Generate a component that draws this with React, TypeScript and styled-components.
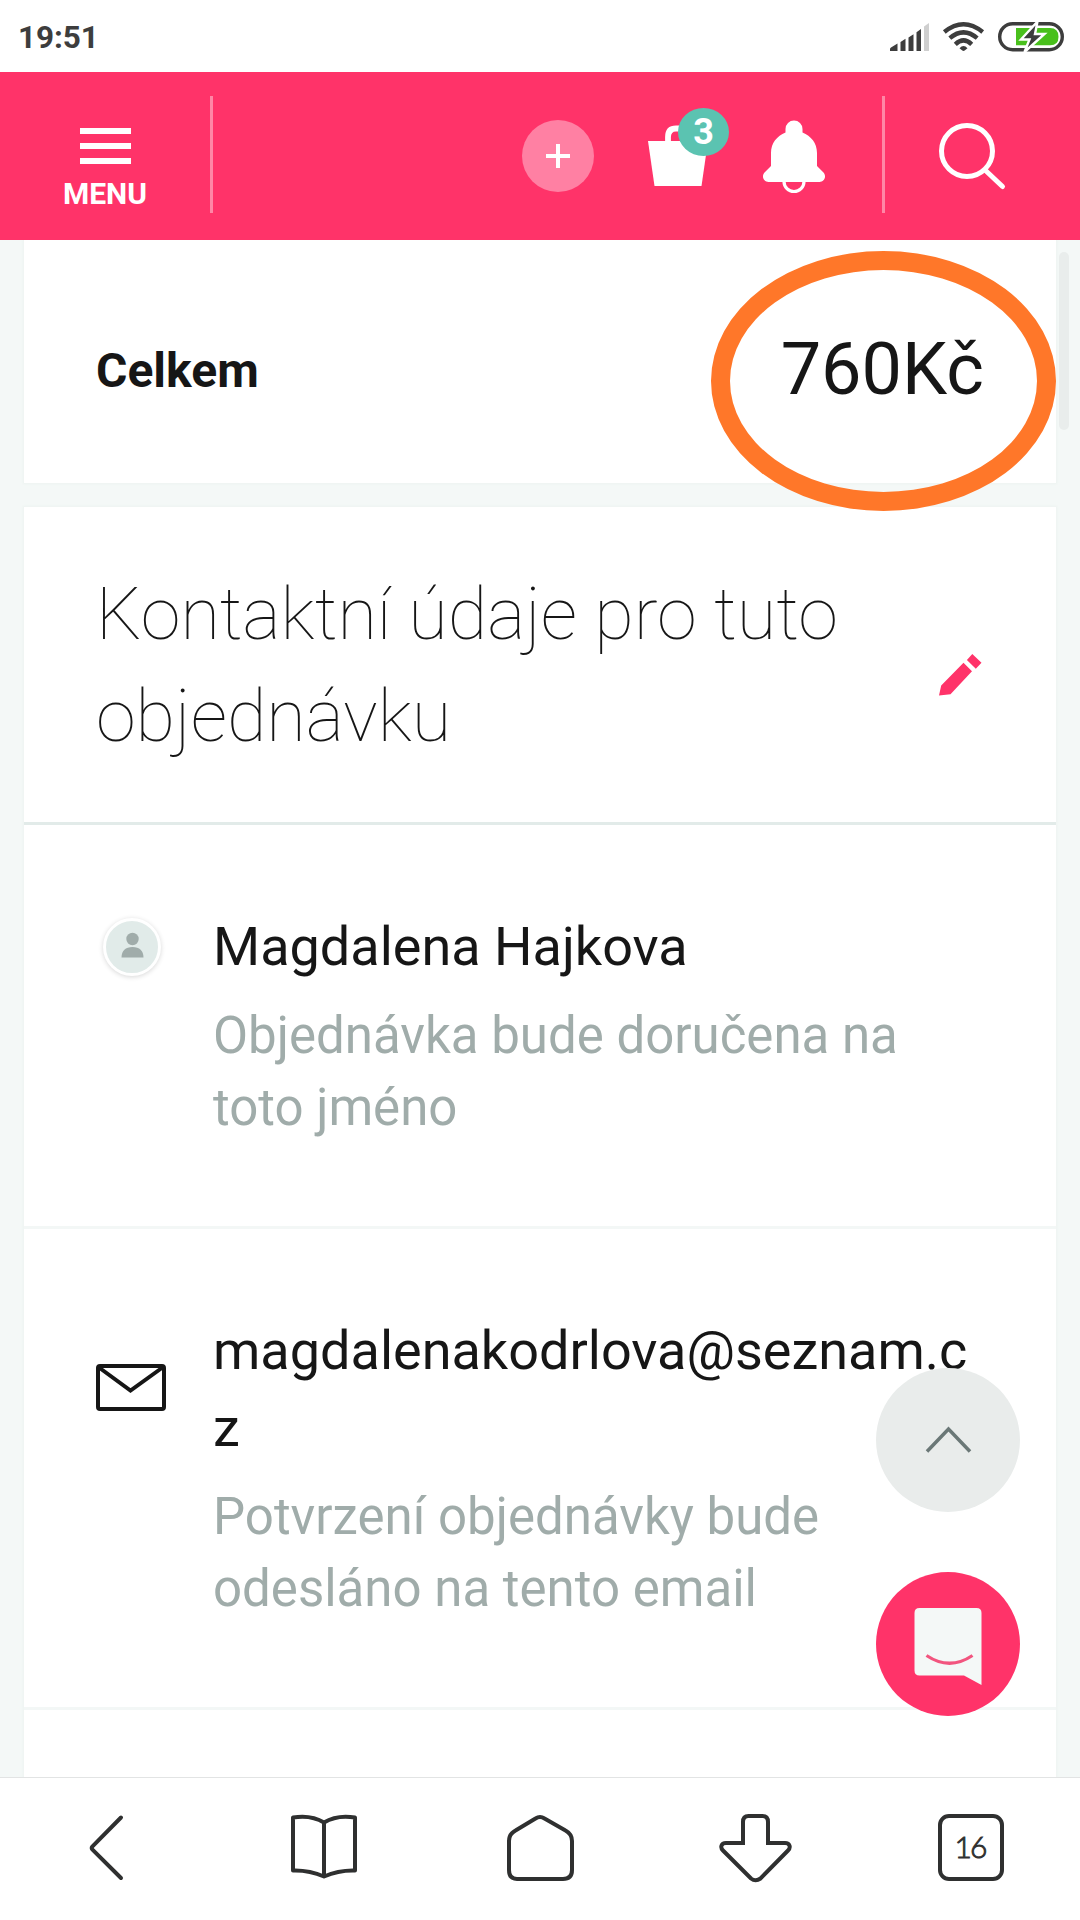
import React from "react";
import styled, { createGlobalStyle } from "styled-components";

const pink = "#ff3369";
const ink = "#161616";
const navInk = "#2f3030";

const GlobalStyle = createGlobalStyle`
  * { box-sizing: border-box; }
  body { margin: 0; background: #fff; }
  p, h1, h2 { margin: 0; font-weight: inherit; }
  svg { display: block; flex: none; overflow: visible; }
  button { border: 0; padding: 0; margin: 0; background: none; font: inherit; color: inherit; }
`;

const Screen = styled.div`
  width: 1080px;
  height: 1920px;
  display: flex;
  flex-direction: column;
  overflow: hidden;
  position: relative;
  background: #fff;
  color: ${ink};
  font-family: Roboto, "Noto Sans", sans-serif;
`;

const StatusBar = styled.div`
  height: 72px;
  flex: none;
  display: flex;
  align-items: center;
  justify-content: space-between;
  padding: 1px 16px 0 18px;
  color: #3d3d3d;
`;

const Clock = styled.span`
  padding-top: 2px;
  font-size: 31.5px;
  font-weight: 700;
  line-height: 38px;
  letter-spacing: -0.1px;
`;

const StatusIcons = styled.div`
  display: flex;
  align-items: center;
  gap: 14px;
`;

const Header = styled.header`
  height: 168px;
  flex: none;
  display: flex;
  align-items: stretch;
  background: ${pink};
  color: #fff;
`;

const MenuButton = styled.button`
  width: 210px;
  display: flex;
  flex-direction: column;
  align-items: center;
  padding-top: 56px;
`;

const Burger = styled.span`
  width: 51px;
  height: 36px;
  display: flex;
  flex-direction: column;
  justify-content: space-between;
`;

const BurgerLine = styled.span`
  height: 6px;
  background: #fff;
`;

const MenuLabel = styled.span`
  margin-top: 12px;
  font-size: 30px;
  font-weight: 700;
  line-height: 35px;
`;

const Divider = styled.span`
  width: 3px;
  height: 117px;
  margin-top: 24px;
  flex: none;
  background: #ff86a6;
`;

const Actions = styled.div`
  flex: 1;
  display: flex;
  justify-content: flex-end;
  padding: 36px 57px 0 0;
`;

const AddButton = styled.button`
  width: 72px;
  height: 72px;
  margin-top: 12px;
  border-radius: 50%;
  display: grid;
  place-items: center;
  background: #ff80a3;
`;

const CartButton = styled.button`
  position: relative;
  width: 60px;
  height: 78px;
  margin: 0 55px 0 54px;
`;

const CartBadge = styled.span`
  position: absolute;
  left: 30px;
  top: 0;
  width: 51px;
  height: 48px;
  border-radius: 50%;
  background: #5bc3b1;
  font-size: 36px;
  font-weight: 700;
  line-height: 48px;
  text-align: center;
`;

const BellButton = styled.button`
  width: 62px;
  height: 74px;
  margin-top: 12px;
`;

const SearchButton = styled.button`
  width: 195px;
  display: flex;
  align-items: flex-start;
  padding: 50px 0 0 54px;
`;

const Content = styled.main`
  flex: 1;
  min-height: 0;
  overflow: hidden;
  padding: 0 24px;
  display: flex;
  flex-direction: column;
  gap: 24px;
  background: #f4f8f7;
`;

const Card = styled.section`
  flex: none;
  background: #fff;
  box-shadow: 0 0 2px 1px #edf3f1;
`;

const TotalCard = styled(Card)`
  height: 243px;
  padding: 15px 72px 0;
  display: flex;
  align-items: center;
  justify-content: space-between;
`;

const TotalLabel = styled.p`
  padding-top: 3px;
  font-size: 48px;
  font-weight: 700;
  line-height: 72px;
`;

const TotalValue = styled.p`
  padding-top: 1px;
  font-size: 72px;
  line-height: 102px;
`;

const ContactHeader = styled.div`
  display: flex;
  align-items: center;
  justify-content: space-between;
  padding: 57px 72px 54px;
  border-bottom: 3px solid #e2ebe9;
`;

const ContactTitle = styled.h2`
  width: 770px;
  font-size: 72px;
  font-weight: 100;
  line-height: 102px;
`;

const EditButton = styled.button`
  margin: 18px 2px 0 0;
`;

const ContactRow = styled.div`
  display: flex;
  padding: 83px 72px 82.4px;
  border-bottom: 3px solid #f3f7f6;
`;

const RowIcon = styled.div<{ $top: number }>`
  width: 117px;
  flex: none;
  padding-top: ${(p) => p.$top}px;
`;

const Avatar = styled.div`
  width: 58px;
  height: 58px;
  margin-left: 7px;
  border: 3px solid #fff;
  border-radius: 50%;
  background: #e1ebe9;
  box-shadow: 0 1px 5px rgba(0, 0, 0, 0.16);
`;

const RowText = styled.div`
  flex: 1;
  min-width: 0;
`;

const RowTitle = styled.p`
  font-size: 54px;
  line-height: 77px;
  word-break: break-all;
`;

const RowNote = styled.p`
  margin-top: 14.6px;
  font-size: 51px;
  line-height: 72px;
  color: #a0acaa;
`;

const NavBar = styled.nav`
  height: 143px;
  flex: none;
  display: grid;
  grid-template-columns: repeat(5, 216px);
  justify-items: center;
  border-top: 1px solid #e2e4e4;
  background: #fff;
`;

const NavItem = styled.button`
  width: 76px;
  height: 76px;
  margin-top: 32px;
`;

const TabCount = styled.button`
  width: 66px;
  height: 67px;
  margin: 36px 2px 0 0;
  padding: 0 2px 3px 0;
  display: grid;
  place-items: center;
  border: 4px solid ${navInk};
  border-radius: 11px;
  color: ${navInk};
  font-family: Lato, sans-serif;
  font-size: 30px;
  font-weight: 300;
  line-height: 36px;
  letter-spacing: -2px;
  -webkit-text-stroke: 0.9px ${navInk};
`;

const ScrollThumb = styled.div`
  position: absolute;
  left: 1059px;
  top: 252px;
  width: 10px;
  height: 178px;
  border-radius: 5px;
  background: #e9edec;
`;

const Highlight = styled.div`
  position: absolute;
  left: 711px;
  top: 251px;
  width: 345px;
  height: 260px;
  border: 19px solid #ff7729;
  border-radius: 50%;
`;

const FloatingButton = styled.button<{ $top: number; $bg: string }>`
  position: absolute;
  left: 876px;
  top: ${(p) => p.$top}px;
  width: 144px;
  height: 144px;
  border-radius: 50%;
  background: ${(p) => p.$bg};
`;

const SignalIcon = () => (
  <svg width="39" height="28" viewBox="0 0 39 28" fill="#3d3d3d">
    <path d="M0 28v-2q0-1 1-1.600l6.500-4V28zM10.500 28v-9l5-3.200V28zM18.500 28v-13.500l5-3.200V28zM26.500 28V9.200l4.500-3.200V28z" />
    <path d="M34 28V3.500l5-3.500v28z" fill="#cfcfcf" />
  </svg>
);

const WifiIcon = () => (
  <svg width="41" height="29" viewBox="0 0 41 29" fill="none" stroke="#3d3d3d" strokeWidth="4.400">
    <path d="M1.300 10Q20.500-5.500 39.700 10M6.800 16.200Q20.500 4.500 34.200 16.200M12.300 22.300Q20.500 14.500 28.700 22.300" />
    <path d="M16.500 26.200Q20.500 22 24.500 26.200L21.700 28.600Q20.500 29.500 19.300 28.600z" fill="#3d3d3d" stroke="none" />
  </svg>
);

const BatteryIcon = () => (
  <svg width="66" height="30" viewBox="0 0 66 30">
    <rect x="1.700" y="1.700" width="62.600" height="26" rx="13" fill="#fff" stroke="#3d3d3d" strokeWidth="3.400" />
    <path d="M18 6h34q8.500 0 8.500 8.700T52 23.300H18z" fill="#49c01c" />
    <path
      d="M39.500-.5L23 17.500h8.500L26.500 30 46.500 12H37z"
      fill="#3d3d3d"
      stroke="#fff"
      strokeWidth="2.400"
    />
  </svg>
);

const PlusIcon = () => (
  <svg width="24" height="24" viewBox="0 0 24 24" stroke="#fff" strokeWidth="4">
    <path d="M12 0v24M0 12h24" />
  </svg>
);

const BagIcon = () => (
  <svg width="60" height="78" viewBox="0 0 60 78">
    <path d="M0 33h60l-6.500 45h-47z" fill="#fff" />
    <path d="M20 35v-6q0-8.500 8-8.500h6q8 0 8 8.500v6" fill="none" stroke="#fff" strokeWidth="5.800" />
  </svg>
);

const BellIcon = () => (
  <svg width="62" height="74" viewBox="0 0 62 74" fill="#fff">
    <path d="M22.500 9a8.500 8.500 0 0 1 17 0v3.500C48 16 54 23 54 33v13l6.500 6.500C64 57 61 62 56.500 62h-51C1 62-2 57 1.500 52.500L8 46V33c0-10 6-17 14.500-20.500z" />
    <circle cx="31" cy="61.500" r="10" fill="none" stroke="#fff" strokeWidth="3.200" />
  </svg>
);

const SearchIcon = () => (
  <svg width="68" height="68" viewBox="0 0 68 68" fill="none" stroke="#fff" strokeWidth="5" strokeLinecap="round">
    <circle cx="28" cy="29" r="25.500" />
    <path d="M46 48L63.500 64.500" />
  </svg>
);

const PencilIcon = () => (
  <svg width="43" height="42" viewBox="0 0 43 42" fill={pink}>
    <path d="M0 41.500L2.200 31.500 24.500 8.700 33 17.300 11.500 40.200zM27.900 6L33.300 0 42.500 8.700 36.800 14.800z" />
  </svg>
);

const PersonIcon = () => (
  <svg width="52" height="52" viewBox="0 0 52 52" fill="#a0acaa">
    <circle cx="26.500" cy="18" r="6.200" />
    <path d="M15.500 36.500c0-6.500 4-10.500 11-10.500s11 4 11 10.500z" />
  </svg>
);

const MailIcon = () => (
  <svg width="70" height="47" viewBox="0 0 70 47" fill="none" stroke={ink} strokeWidth="4">
    <rect x="2" y="2" width="66" height="43" rx="2" />
    <path d="M3 3.500L34.500 26.500 66.500 3.500" />
  </svg>
);

const ChevronUpIcon = () => (
  <svg width="144" height="144" viewBox="0 0 144 144" fill="none" stroke="#6b7877" strokeWidth="3.500">
    <path d="M51 83.500L72.500 61 94 83.500" />
  </svg>
);

const ChatIcon = () => (
  <svg width="144" height="144" viewBox="0 0 144 144">
    <path d="M43.500 36h57q5 0 5 5v72L88 103.500H43.500q-5 0-5-5V41q0-5 5-5z" fill="#f4f8f7" />
    <path d="M50.500 83.500Q73.500 99 96.500 83.500" fill="none" stroke="#f2557f" strokeWidth="3.200" />
  </svg>
);

const navStroke = {
  width: 76,
  height: 76,
  viewBox: "0 0 76 76",
  fill: "none",
  stroke: navInk,
  strokeWidth: 4,
  strokeLinecap: "round" as const,
  strokeLinejoin: "round" as const,
};

const BackIcon = () => (
  <svg {...navStroke}>
    <path d="M51 7.500L22.500 36.300Q21 38 22.500 39.700L51 68" />
  </svg>
);

const BookIcon = () => (
  <svg {...navStroke}>
    <path d="M38 12.500Q25 4.500 7 7.500V60.500Q23 60 38 66.500 53 60 69 60.500V7.500Q51 4.500 38 12.500V66" />
  </svg>
);

const HomeIcon = () => (
  <svg {...navStroke}>
    <path d="M33.500 8.500Q38 5.500 42.500 8.500L63.500 20.500Q70 24 70 31V60Q70 69 61 69H15Q7 69 7 60V31Q7 24 13.500 20.500z" />
  </svg>
);

const DownloadIcon = () => (
  <svg {...navStroke} strokeLinejoin="miter" strokeLinecap="butt">
    <path d="M50 33H67C72 33 73 37.500 70 40.500L42.500 68.500Q37.500 72 33 68.500L5 40.500C2 37.500 3 33 8 33H25V12Q25 6 30.500 6H44.500Q50 6 50 12z" />
  </svg>
);

export default function App() {
  return (
    <Screen>
      <GlobalStyle />
      <StatusBar>
        <Clock>19:51</Clock>
        <StatusIcons>
          <SignalIcon />
          <WifiIcon />
          <BatteryIcon />
        </StatusIcons>
      </StatusBar>

      <Header>
        <MenuButton>
          <Burger>
            <BurgerLine />
            <BurgerLine />
            <BurgerLine />
          </Burger>
          <MenuLabel>MENU</MenuLabel>
        </MenuButton>
        <Divider />
        <Actions>
          <AddButton>
            <PlusIcon />
          </AddButton>
          <CartButton>
            <BagIcon />
            <CartBadge>3</CartBadge>
          </CartButton>
          <BellButton>
            <BellIcon />
          </BellButton>
        </Actions>
        <Divider />
        <SearchButton>
          <SearchIcon />
        </SearchButton>
      </Header>

      <Content>
        <TotalCard>
          <TotalLabel>Celkem</TotalLabel>
          <TotalValue>760Kč</TotalValue>
        </TotalCard>

        <Card>
          <ContactHeader>
            <ContactTitle>Kontaktní údaje pro tuto objednávku</ContactTitle>
            <EditButton>
              <PencilIcon />
            </EditButton>
          </ContactHeader>
          <ContactRow>
            <RowIcon $top={10}>
              <Avatar>
                <PersonIcon />
              </Avatar>
            </RowIcon>
            <RowText>
              <RowTitle>Magdalena Hajkova</RowTitle>
              <RowNote>Objednávka bude doručena na toto jméno</RowNote>
            </RowText>
          </ContactRow>
          <ContactRow>
            <RowIcon $top={52}>
              <MailIcon />
            </RowIcon>
            <RowText>
              <RowTitle>magdalenakodrlova@seznam.cz</RowTitle>
              <RowNote>Potvrzení objednávky bude odesláno na tento email</RowNote>
            </RowText>
          </ContactRow>
          <ContactRow />
        </Card>
      </Content>

      <NavBar>
        <NavItem>
          <BackIcon />
        </NavItem>
        <NavItem>
          <BookIcon />
        </NavItem>
        <NavItem>
          <HomeIcon />
        </NavItem>
        <NavItem>
          <DownloadIcon />
        </NavItem>
        <TabCount>16</TabCount>
      </NavBar>

      <ScrollThumb />
      <Highlight />
      <FloatingButton $top={1368} $bg="#e9eceb">
        <ChevronUpIcon />
      </FloatingButton>
      <FloatingButton $top={1572} $bg={pink}>
        <ChatIcon />
      </FloatingButton>
    </Screen>
  );
}
